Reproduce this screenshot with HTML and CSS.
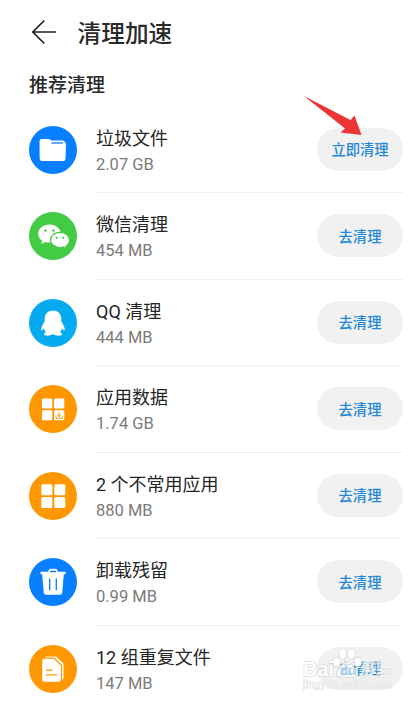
FILE: index.html
```html
<!DOCTYPE html>
<html lang="zh-CN">
<head>
<meta charset="utf-8">
<title>清理加速</title>
<link rel="stylesheet" href="styles.css">
</head>
<body>
<header class="header">
  <svg class="back" viewBox="0 0 26 26"><path d="M25 13H2M13.300 1.500 1.800 13l11.500 11.500"/></svg>
  <h1>清理加速</h1>
</header>
<h2>推荐清理</h2>
<ul class="list">
  <li class="row">
    <svg class="icon blue" viewBox="0 0 48 48"><circle cx="24" cy="24" r="24"/><path class="w" d="M10.500 15q0-2 2-2h7.500q1.500 0 2 1.500h11.500q2.500 0 2.500 2.500h.3q.8 0 .7 1.200l-.5 14.500q-.2 2.300-2.500 2.300H13q-2.200 0-2.300-2.300z"/><path class="s" d="M22.500 17H34"/></svg>
    <div class="info"><div class="text"><b>垃圾文件</b><span>2.07 GB</span></div><button>立即清理</button></div>
  </li>
  <li class="row">
    <svg class="icon green" viewBox="0 0 48 48"><circle cx="24" cy="24" r="24"/><path class="w" d="M20.500 12.500c-6.300 0-11.300 4-11.300 9.200 0 2.900 1.500 5.400 4 7l-.8 3.300 3.900-2c1.300.4 2.700.6 4.200.6 6.200 0 11.200-4 11.200-9s-5-9.100-11.200-9.100z"/><path class="w edge" d="M31 20.300c-5.300 0-9.500 3.400-9.500 7.600s4.200 7.600 9.500 7.600c1.200 0 2.300-.2 3.400-.5l3.300 1.700-.7-2.700c2.100-1.400 3.500-3.600 3.500-6.100 0-4.200-4.200-7.600-9.500-7.600z"/><g><circle cx="16.300" cy="18.500" r="1.300"/><circle cx="24.500" cy="18.500" r="1.300"/><circle cx="27.800" cy="25.800" r="1.100"/><circle cx="34.300" cy="25.800" r="1.100"/></g></svg>
    <div class="info"><div class="text"><b>微信清理</b><span>454 MB</span></div><button>去清理</button></div>
  </li>
  <li class="row">
    <svg class="icon cyan" viewBox="0 0 48 48"><circle cx="24" cy="24" r="24"/><path class="w" d="M24 11.500c-5.500 0-8.300 4-8.300 8.500v2.500c-1.500 2.300-3.300 5.300-3.500 7.600-.1 1.800.8 1.700 2.800-.6.4 1.500 1 2.700 2 3.700-1.700.6-2.300 1.500-1.800 2.500.7 1.300 5.800 1.300 8.800-.4 3 1.700 8.100 1.700 8.800.4.500-1-.1-1.900-1.800-2.500 1-1 1.600-2.200 2-3.700 2 2.300 2.900 2.400 2.800.6-.2-2.300-2-5.300-3.500-7.600V20c0-4.500-2.800-8.500-8.300-8.500z"/></svg>
    <div class="info"><div class="text"><b>QQ 清理</b><span>444 MB</span></div><button>去清理</button></div>
  </li>
  <li class="row">
    <svg class="icon orange" viewBox="0 0 48 48"><circle cx="24" cy="24" r="24"/><g class="w"><rect x="13" y="13.500" width="10.300" height="10" rx="1.500"/><rect x="25" y="13.500" width="10.300" height="10" rx="1.500"/><rect x="13" y="25.300" width="10.300" height="10" rx="1.500"/><rect x="25" y="25.300" width="10.300" height="10" rx="1.500"/></g><path class="s thin" d="M30.100 27v4.600m-2.300-2.200 2.300 2.300 2.300-2.300M27 31.500v1.900h6.300v-1.900"/></svg>
    <div class="info"><div class="text"><b>应用数据</b><span>1.74 GB</span></div><button>去清理</button></div>
  </li>
  <li class="row">
    <svg class="icon orange" viewBox="0 0 48 48"><circle cx="24" cy="24" r="24"/><g class="w"><rect x="12.300" y="12.300" width="11" height="11" rx="1.500"/><rect x="25.300" y="12.300" width="11" height="11" rx="1.500"/><rect x="12.300" y="25" width="11" height="11" rx="1.500"/><rect x="25.300" y="25" width="11" height="11" rx="1.500"/></g></svg>
    <div class="info"><div class="text"><b>2 个不常用应用</b><span>880 MB</span></div><button>去清理</button></div>
  </li>
  <li class="row">
    <svg class="icon blue" viewBox="0 0 48 48"><circle cx="24" cy="24" r="24"/><path class="w" d="M11.500 13.700H19l1.200-2.200q.4-.7 1.200-.7h5.200q.8 0 1.200.7l1.200 2.200h7.500v2.600h-1.700l-1.500 18.300q-.2 2.200-2.400 2.200H17.100q-2.200 0-2.400-2.200l-1.500-18.300h-1.700z"/><path class="s" d="M21 13.500h6M20.700 20.500v11.800M27.300 20.500v11.800"/></svg>
    <div class="info"><div class="text"><b>卸载残留</b><span>0.99 MB</span></div><button>去清理</button></div>
  </li>
  <li class="row">
    <svg class="icon orange" viewBox="0 0 48 48"><circle cx="24" cy="24" r="24"/><path class="w" d="M16.500 11.500H27l7.500 7v14q0 2.500-2.500 2.500H16.500z"/><path class="w edge" d="M15.300 13.200h9.800l7.400 7v14.300q0 2.800-2.800 2.800H15.300q-2.600 0-2.600-2.600v-19q0-2.500 2.600-2.500z"/><path class="s" d="M17 25.200h6.500M17 29.800h11"/></svg>
    <div class="info"><div class="text"><b>12 组重复文件</b><span>147 MB</span></div><button>去清理</button></div>
  </li>
</ul>
<svg class="pointer" viewBox="0 0 60 42"><path d="M1 1 47.500 25l4-4.500L58.500 40l-21-2.500 4.500-4z"/></svg>
<div class="watermark">
  <svg viewBox="0 0 110 50">
    <g class="paw"><ellipse cx="36.500" cy="21" rx="3.300" ry="4.300"/><ellipse cx="43" cy="13" rx="3.500" ry="5"/><ellipse cx="51.500" cy="13" rx="3.500" ry="5"/><ellipse cx="58" cy="21" rx="3.300" ry="4.300"/><path class="pad" d="M47 20.500c-4 0-5 5-8 7.500-4 3-3 8 2 8h12c5 0 6-5 2-8-3-2.500-4-7.500-8-7.500z"/></g>
    <text class="logo" x="3" y="35" textLength="31" lengthAdjust="spacingAndGlyphs">Bai</text>
    <text class="logo du" x="40" y="33.500">du</text>
    <text class="logo cn" x="61" y="34.500" textLength="30" lengthAdjust="spacingAndGlyphs">经验</text>
    <text class="site" x="3" y="47" textLength="89">jingyan.baidu.com</text>
  </svg>
</div>
</body>
</html>
```
FILE: styles.css
```css
* { box-sizing: border-box; }
body {
  margin: 0;
  width: 420px;
  height: 703px;
  position: relative;
  overflow: hidden;
  background: #fff;
  color: #2a2a2a;
  font-family: Roboto, "Noto Sans CJK SC", sans-serif;
}
.header {
  display: flex;
  align-items: center;
  gap: 20.5px;
  height: 64px;
  padding: 0 0 0 31px;
}
.back { width: 26px; height: 26px; fill: none; stroke: #222; stroke-width: 1.7; }
h1, h2 { margin: 0; font-weight: 500; }
h1 { padding-top: 3px; font-size: 23.7px; line-height: 34px; }
h2 { height: 42.5px; padding-left: 29px; font-size: 19px; line-height: 43px; }
.list { margin: 0; padding: 0; list-style: none; }
.row { display: flex; align-items: center; gap: 19px; height: 86.5px; padding: 0 17px 0 29px; }
.icon { flex: none; width: 48px; height: 48px; fill: var(--c); }
.blue { --c: #087fff; }
.green { --c: #43cb44; }
.cyan { --c: #06aaf1; }
.orange { --c: #ff9800; }
.w { fill: #fff; }
.edge { stroke: var(--c); stroke-width: 1.2; }
.s { fill: none; stroke: var(--c); stroke-width: 1.3; }
.thin { stroke-width: 1; }
.info {
  flex: 1;
  display: flex;
  align-items: center;
  justify-content: space-between;
  height: 100%;
  border-bottom: 1.5px solid #f0f0f0;
}
.row:last-child .info { border-color: transparent; }
.text { display: flex; flex-direction: column; gap: 2px; padding-top: 3px; }
.text b { font-size: 18px; line-height: 26px; font-weight: 400; color: #262626; }
.text span { font-size: 16.5px; line-height: 22px; color: #7b7b7b; }
button {
  width: 86px;
  height: 43px;
  padding: 2px 0 0;
  border: 0;
  border-radius: 22px;
  background: #f1f1f1;
  color: #2388d8;
  font: 500 14.3px/20px Roboto, "Noto Sans CJK SC", sans-serif;
}
.pointer { position: absolute; left: 303px; top: 95px; width: 60px; height: 42px; fill: #ee3536; }
.watermark { position: absolute; left: 300px; top: 641px; width: 110px; height: 50px; }
.watermark svg { display: block; width: 110px; height: 50px; }
.watermark text, .paw { fill: #fff; stroke: #d2d2d2; stroke-width: 1.2; paint-order: stroke; }
.pad { fill-opacity: .7; }
.logo { font: 700 20px "Liberation Sans", "Noto Sans CJK SC", sans-serif; }
.watermark .du { font-size: 13px; fill: #7fb8e6; fill-opacity: .6; stroke: none; }
.watermark .cn { font-size: 17px; fill-opacity: .6; stroke-opacity: .5; }
.watermark .site { font: 10px "Liberation Sans", sans-serif; fill: #f6f6f6; stroke: #dcdcdc; stroke-width: .8; }
```
